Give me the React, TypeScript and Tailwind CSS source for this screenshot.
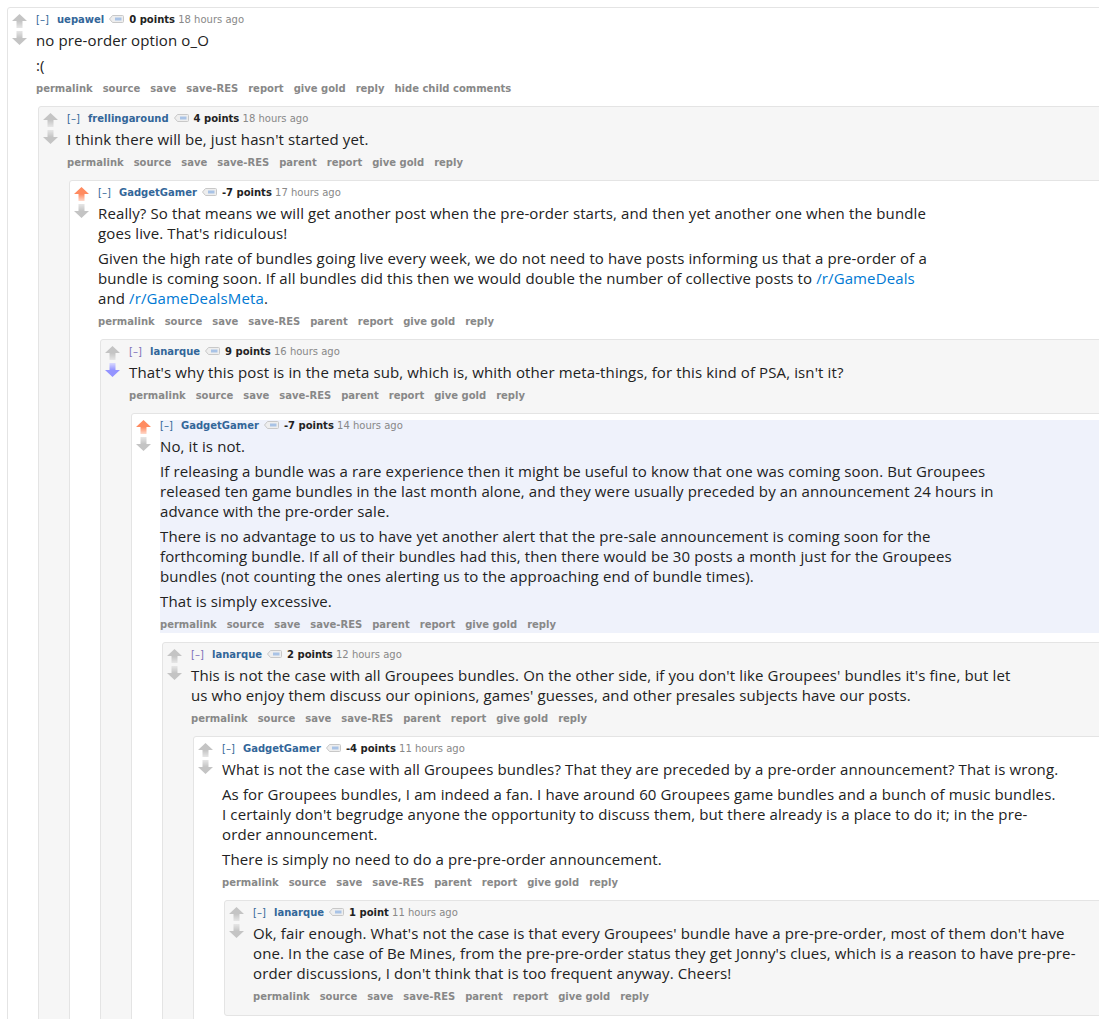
import React, { useId } from "react";

type Arrow = "gray" | "orange" | "blue";
type Part = string | { link: string };
type C = {
  author: string;
  expandColor: string;
  points: string;
  time: string;
  up: Arrow;
  down: Arrow;
  highlight?: boolean;
  paras: Part[][][];
  buttons: string[];
  child?: C;
};

const COLORS: Record<Arrow, [string, string]> = {
  gray: ["#c4c4c4", "#e6e6e6"],
  orange: ["#ff8b60", "#ffd9cb"],
  blue: ["#9494ff", "#d9d9ff"],
};

function VoteArrow({ dir, color }: { dir: "up" | "down"; color: Arrow }) {
  const id = useId().replace(/:/g, "");
  const [c1, c2] = COLORS[color];
  const up = dir === "up";
  return (
    <svg width="15" height="14" viewBox="0 0 15 14" className="block">
      <defs>
        <linearGradient id={id} x1="0" y1={up ? "0" : "1"} x2="0" y2={up ? "1" : "0"}>
          <stop offset="0" stopColor={c1} />
          <stop offset="0.5" stopColor={c1} />
          <stop offset="1" stopColor={c2} />
        </linearGradient>
      </defs>
      {up ? (
        <path d="M7.5 0 L15 7 L10.5 7 L10.5 14 L4.5 14 L4.5 7 L0 7 Z" fill={`url(#${id})`} />
      ) : (
        <path d="M7.5 14 L15 7 L10.5 7 L10.5 0 L4.5 0 L4.5 7 L0 7 Z" fill={`url(#${id})`} />
      )}
    </svg>
  );
}

function TagIcon() {
  return (
    <svg width="15" height="8" viewBox="0 0 15 8" className="inline-block align-middle mx-[5px] relative -top-[1px]">
      <path d="M0.5 4 L3.5 0.5 H13.5 Q14.5 0.5 14.5 1.5 V6.5 Q14.5 7.5 13.5 7.5 H3.5 Z" fill="#eeeeee" stroke="#c8c8c8" strokeWidth="1" />
      <rect x="6" y="2.5" width="6.5" height="3" fill="#a9c3e6" />
    </svg>
  );
}

const STD = ["permalink", "source", "save", "save-RES", "parent", "report", "give gold", "reply"];

const data: C = {
  author: "uepawel",
  expandColor: "#336699",
  points: "0 points",
  time: "18 hours ago",
  up: "gray",
  down: "gray",
  paras: [[["no pre-order option o_O"]], [[":("]]],
  buttons: ["permalink", "source", "save", "save-RES", "report", "give gold", "reply", "hide child comments"],
  child: {
    author: "frellingaround",
    expandColor: "#336699",
    points: "4 points",
    time: "18 hours ago",
    up: "gray",
    down: "gray",
    paras: [[["I think there will be, just hasn't started yet."]]],
    buttons: STD,
    child: {
      author: "GadgetGamer",
      expandColor: "#336699",
      points: "-7 points",
      time: "17 hours ago",
      up: "orange",
      down: "gray",
      paras: [
        [
          ["Really? So that means we will get another post when the pre-order starts, and then yet another one when the bundle"],
          ["goes live. That's ridiculous!"],
        ],
        [
          ["Given the high rate of bundles going live every week, we do not need to have posts informing us that a pre-order of a"],
          ["bundle is coming soon. If all bundles did this then we would double the number of collective posts to ", { link: "/r/GameDeals" }],
          ["and ", { link: "/r/GameDealsMeta" }, "."],
        ],
      ],
      buttons: STD,
      child: {
        author: "lanarque",
        expandColor: "#7d6fb8",
        points: "9 points",
        time: "16 hours ago",
        up: "gray",
        down: "blue",
        paras: [[["That's why this post is in the meta sub, which is, whith other meta-things, for this kind of PSA, isn't it?"]]],
        buttons: STD,
        child: {
          author: "GadgetGamer",
          expandColor: "#336699",
          points: "-7 points",
          time: "14 hours ago",
          up: "orange",
          down: "gray",
          highlight: true,
          paras: [
            [["No, it is not."]],
            [
              ["If releasing a bundle was a rare experience then it might be useful to know that one was coming soon. But Groupees"],
              ["released ten game bundles in the last month alone, and they were usually preceded by an announcement 24 hours in"],
              ["advance with the pre-order sale."],
            ],
            [
              ["There is no advantage to us to have yet another alert that the pre-sale announcement is coming soon for the"],
              ["forthcoming bundle. If all of their bundles had this, then there would be 30 posts a month just for the Groupees"],
              ["bundles (not counting the ones alerting us to the approaching end of bundle times)."],
            ],
            [["That is simply excessive."]],
          ],
          buttons: STD,
          child: {
            author: "lanarque",
            expandColor: "#7d6fb8",
            points: "2 points",
            time: "12 hours ago",
            up: "gray",
            down: "gray",
            paras: [
              [
                ["This is not the case with all Groupees bundles. On the other side, if you don't like Groupees' bundles it's fine, but let"],
                ["us who enjoy them discuss our opinions, games' guesses, and other presales subjects have our posts."],
              ],
            ],
            buttons: STD,
            child: {
              author: "GadgetGamer",
              expandColor: "#336699",
              points: "-4 points",
              time: "11 hours ago",
              up: "gray",
              down: "gray",
              paras: [
                [["What is not the case with all Groupees bundles? That they are preceded by a pre-order announcement? That is wrong."]],
                [
                  ["As for Groupees bundles, I am indeed a fan. I have around 60 Groupees game bundles and a bunch of music bundles."],
                  ["I certainly don't begrudge anyone the opportunity to discuss them, but there already is a place to do it; in the pre-"],
                  ["order announcement."],
                ],
                [["There is simply no need to do a pre-pre-order announcement."]],
              ],
              buttons: STD,
              child: {
                author: "lanarque",
                expandColor: "#336699",
                points: "1 point",
                time: "11 hours ago",
                up: "gray",
                down: "gray",
                paras: [
                  [
                    ["Ok, fair enough. What's not the case is that every Groupees' bundle have a pre-pre-order, most of them don't have"],
                    ["one. In the case of Be Mines, from the pre-pre-order status they get Jonny's clues, which is a reason to have pre-pre-"],
                    ["order discussions, I don't think that is too frequent anyway. Cheers!"],
                  ],
                ],
                buttons: STD,
              },
            },
          },
        },
      },
    },
  },
};

function Comment({ c, depth }: { c: C; depth: number }) {
  const bg = depth % 2 === 0 ? "bg-white" : "bg-[#f6f6f6]";
  return (
    <div className={`border border-[#e4e4e4] rounded-[3px] ${bg} pt-[6px] pb-[10px] pl-[4px]`}>
      <div className="flex">
        <div className="w-[24px] shrink-0">
          <VoteArrow dir="up" color={c.up} />
          <div className="h-[3px]" />
          <VoteArrow dir="down" color={c.down} />
        </div>
        <div className={`flex-1 min-w-0 ${c.highlight ? "bg-[#eff2fb]" : ""}`}>
          <div className="font-['DejaVu_Sans',Verdana,sans-serif] text-[10px] leading-[12px] whitespace-nowrap">
            <span style={{ color: c.expandColor }}>[–]</span>{" "}
            <span className="font-bold text-[#336699] ml-[5px]">{c.author}</span>
            <TagIcon />
            <span className="font-bold text-[#222]">{c.points}</span>{" "}
            <span className="text-[#888]">{c.time}</span>
          </div>
          <div className="mt-[4px] font-['Open_Sans',sans-serif] text-[15px] tracking-[0.12px] leading-[20px] text-[#222] flex flex-col gap-[5px]">
            {c.paras.map((p, i) => (
              <p key={i} className="whitespace-nowrap">
                {p.map((line, j) => (
                  <React.Fragment key={j}>
                    {j > 0 && <br />}
                    {line.map((part, k) =>
                      typeof part === "string" ? (
                        <React.Fragment key={k}>{part}</React.Fragment>
                      ) : (
                        <a key={k} className="text-[#0079d3]">
                          {part.link}
                        </a>
                      )
                    )}
                  </React.Fragment>
                ))}
              </p>
            ))}
          </div>
          <div className="mt-[6px] flex gap-[10px] font-['DejaVu_Sans',Verdana,sans-serif] text-[10px] leading-[16px] font-bold text-[#888] whitespace-nowrap">
            {c.buttons.map((b) => (
              <span key={b}>{b}</span>
            ))}
          </div>
        </div>
      </div>
      {c.child && (
        <div className="ml-[26px] mt-[9px]">
          <Comment c={c.child} depth={depth + 1} />
        </div>
      )}
    </div>
  );
}

export default function App() {
  return (
    <div className="w-[1099px] h-[1019px] overflow-hidden bg-white">
      <div className="pt-[7px] pl-[7px] w-[1400px]">
        <Comment c={data} depth={0} />
      </div>
    </div>
  );
}
